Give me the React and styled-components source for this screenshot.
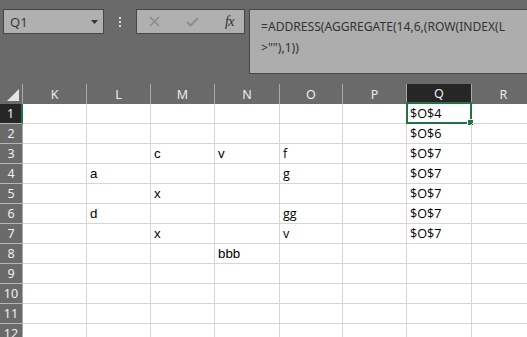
import React from 'react';
import styled, { createGlobalStyle, css } from 'styled-components';

const GlobalStyle = createGlobalStyle`
  html, body {
    margin: 0;
    padding: 0;
    background: #6a6a6a;
    overflow: hidden;
  }
`;

const SCREEN = styled.div`
  width: 527px;
  height: 337px;
  overflow: hidden;
  display: flex;
  flex-direction: column;
  background: #6a6a6a;
`;

const TOOLBAR = styled.div`
  height: 84px;
  flex-shrink: 0;
  box-sizing: border-box;
  padding: 9px 0 0 3px;
  display: flex;
  align-items: flex-start;
`;

const NAMEBOX = styled.div`
  width: 101px;
  height: 25px;
  box-sizing: border-box;
  background: #b0b0b0;
  border: 1px solid #474747;
  display: flex;
  align-items: center;
  justify-content: space-between;
  padding: 0 5px 0 6px;
  font-family: "Noto Sans", sans-serif;
  font-size: 13px;
  color: #3a3a3a;
`;

const GRIP = styled.div`
  width: 32px;
  height: 25px;
  display: flex;
  flex-direction: column;
  align-items: center;
  justify-content: center;
  gap: 2px;
`;

const DOT = styled.span`
  width: 2px;
  height: 2px;
  background: #dcdcdc;
`;

const BUTTONS = styled.div`
  width: 109px;
  height: 25px;
  box-sizing: border-box;
  background: #b0b0b0;
  border: 1px solid #474747;
  display: flex;
  align-items: center;
  padding: 0 10px 0 12px;
  justify-content: space-between;
`;

const FX = styled.span`
  font-family: "Liberation Serif", serif;
  font-style: italic;
  font-size: 14px;
  color: #2e2e2e;
  letter-spacing: -0.5px;
`;

const FORMULABAR = styled.div`
  flex: 1;
  margin-left: 4px;
  height: 65px;
  box-sizing: border-box;
  background: #adadad;
  border: 1px solid #474747;
  border-right: none;
  padding: 6px 0 0 11px;
  font-family: "Noto Sans", sans-serif;
  font-size: 12.1px;
  line-height: 21px;
  color: #333;
  white-space: pre;
  overflow: hidden;
`;

const SHEET = styled.div`
  display: grid;
  grid-template-columns: 23px 64px 64px 64px 65px 63px 64px 65px 64px;
  grid-auto-rows: 20px;
  background: #fff;
`;

const CORNER = styled.div`
  background: #6a6a6a;
  border-right: 1px solid #a9a9a9;
  display: flex;
  align-items: flex-end;
  justify-content: flex-end;
  padding: 0 3px 3px 0;
  box-sizing: border-box;
`;

const COLHEAD = styled.div`
  background: ${p => (p.$active ? '#262626' : '#6a6a6a')};
  border-right: 1px solid #a9a9a9;
  ${p => p.$active && css`border-bottom: 1px solid #217346;`}
  box-sizing: border-box;
  display: flex;
  align-items: center;
  justify-content: center;
  font-family: "Noto Sans", sans-serif;
  font-size: 12.5px;
  color: #ececec;
`;

const ROWHEAD = styled.div`
  background: ${p => (p.$active ? '#262626' : '#6a6a6a')};
  border-bottom: 1px solid #b5b5b5;
  border-right: ${p => (p.$active ? '2px solid #217346' : '1px solid #a9a9a9')};
  box-sizing: border-box;
  display: flex;
  align-items: center;
  justify-content: center;
  font-family: "Noto Sans", sans-serif;
  font-size: 12.5px;
  color: #f0f0f0;
`;

const CELL = styled.div`
  position: relative;
  box-sizing: border-box;
  border-right: 1px solid #d6d6d6;
  border-bottom: 1px solid #d6d6d6;
  padding: 0 0 0 3px;
  display: flex;
  align-items: flex-end;
  color: #000;
  white-space: nowrap;
  ${p =>
    p.$calibri
      ? css`
          font-family: "Open Sans", sans-serif;
          font-size: 12.6px;
          line-height: 18px;
        `
      : css`
          font-family: "Liberation Sans", Arial, sans-serif;
          font-size: 13.3px;
          line-height: 18px;
        `}
`;

const SELECTION = styled.div`
  position: absolute;
  top: -2px;
  left: -1px;
  right: -1px;
  bottom: -1px;
  border: 2px solid #217346;
  pointer-events: none;
`;

const HANDLE = styled.div`
  position: absolute;
  right: -4px;
  bottom: -4px;
  width: 5px;
  height: 5px;
  background: #217346;
  border: 1px solid #fff;
`;

const COLUMNS = ['K', 'L', 'M', 'N', 'O', 'P', 'Q', 'R'];
const CALIBRI_COLS = ['O', 'Q'];

const DATA = {
  1: { Q: '$O$4' },
  2: { Q: '$O$6' },
  3: { M: 'c', N: 'v', O: 'f', Q: '$O$7' },
  4: { L: 'a', O: 'g', Q: '$O$7' },
  5: { M: 'x', Q: '$O$7' },
  6: { L: 'd', O: 'gg', Q: '$O$7' },
  7: { M: 'x', O: 'v', Q: '$O$7' },
  8: { N: 'bbb' },
};

const ROWS = [1, 2, 3, 4, 5, 6, 7, 8, 9, 10, 11, 12];

const App = () => {
  return (
    <SCREEN>
      <GlobalStyle />
      <TOOLBAR>
        <NAMEBOX>
          <span>Q1</span>
          <svg width="7" height="4" viewBox="0 0 7 4">
            <path d="M0 0 L7 0 L3.5 4 Z" fill="#333" />
          </svg>
        </NAMEBOX>
        <GRIP>
          <DOT />
          <DOT />
          <DOT />
        </GRIP>
        <BUTTONS>
          <svg width="11" height="11" viewBox="0 0 11 11">
            <path d="M1 1 L10 10 M10 1 L1 10" stroke="#8c8c8c" strokeWidth="1.6" />
          </svg>
          <svg width="13" height="10" viewBox="0 0 13 10">
            <path d="M1 5 L4.5 8.5 L12 1" stroke="#8c8c8c" strokeWidth="2" fill="none" />
          </svg>
          <FX>fx</FX>
        </BUTTONS>
        <FORMULABAR>
          {'=ADDRESS(AGGREGATE(14,6,(ROW(INDEX(L\n>""),1))'}
        </FORMULABAR>
      </TOOLBAR>
      <SHEET>
        <CORNER>
          <svg width="12" height="12" viewBox="0 0 12 12">
            <path d="M12 0 L12 12 L0 12 Z" fill="#e4e4e4" />
          </svg>
        </CORNER>
        {COLUMNS.map(c => (
          <COLHEAD key={c} $active={c === 'Q'}>{c}</COLHEAD>
        ))}
        {ROWS.map(r => (
          <React.Fragment key={r}>
            <ROWHEAD $active={r === 1}>{r}</ROWHEAD>
            {COLUMNS.map(c => (
              <CELL key={c} $calibri={CALIBRI_COLS.includes(c)}>
                {DATA[r] && DATA[r][c]}
                {r === 1 && c === 'Q' && (
                  <SELECTION>
                    <HANDLE />
                  </SELECTION>
                )}
              </CELL>
            ))}
          </React.Fragment>
        ))}
      </SHEET>
    </SCREEN>
  );
};

export default App;
